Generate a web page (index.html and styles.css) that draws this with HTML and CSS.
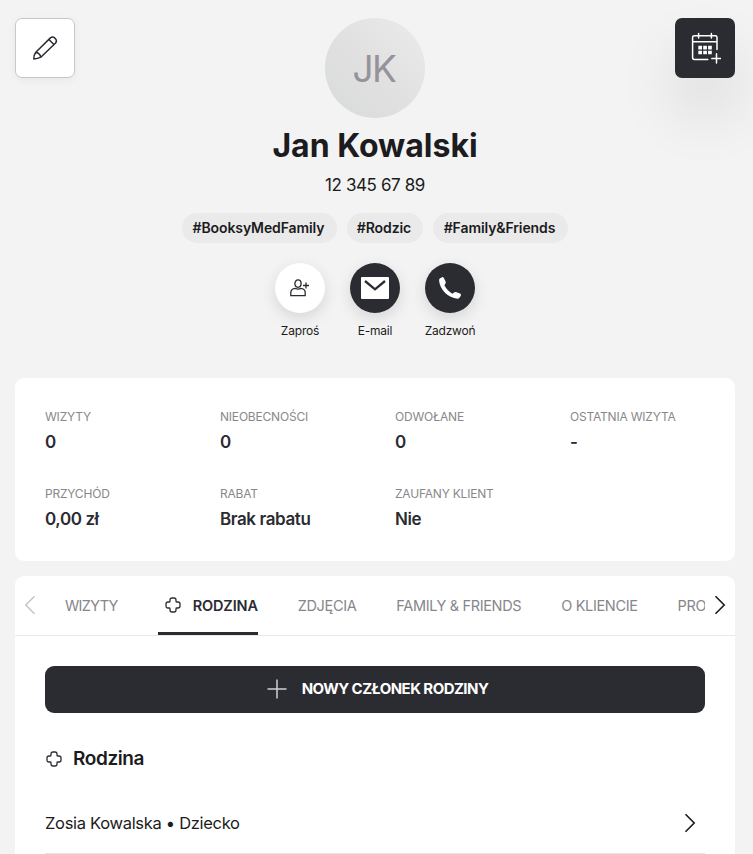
FILE: index.html
```
<!DOCTYPE html>
<html lang="pl">
<head>
    <meta charset="UTF-8">
    <meta name="viewport" content="width=device-width, initial-scale=1.0">
    <title>Jan Kowalski</title>
    <link rel="stylesheet" href="styles.css">
</head>
<body>

    <div class="page">
        <!-- Header -->
        <div class="header">
            <button class="square-btn" aria-label="Edytuj">
                <svg width="30" height="30" viewBox="0 0 30 30" fill="none" stroke="#2b2b32" stroke-width="1.5" stroke-linejoin="round">
                    <path d="M5.8 19.3 20.4 4.9Q22.6 3.2 24.7 4.9L25.6 5.9Q27.3 8 25.6 10L10.8 24.2Q7.8 25.9 3.8 26Q3.5 22.4 5.8 19.3Z"/>
                    <path d="M18.9 6.5 23.9 11.5M5.8 19.3Q10 20.5 10.8 24.2"/>
                </svg>
            </button>
            <div class="avatar">JK</div>
            <button class="square-btn dark" aria-label="Nowa wizyta">
                <svg width="32" height="32" viewBox="0 0 32 32" fill="none" stroke="#fff" stroke-width="1.5" stroke-linecap="round">
                    <path d="M18.8 27.4H5.3Q3.6 27.4 3.6 25.6V5.4Q3.6 3.8 5.3 3.8H26.4Q28 3.8 28 5.4V17.5M3.6 9.7H28M9.6 1.5V6M22.4 1.5V6M27.5 21.7V31M22.8 26.4H32"/>
                    <path d="M9.3 13.7h3.7v3.7H9.3zM14.2 13.7h3.7v3.7h-3.7zM19.1 13.7h3.7v3.7h-3.7zM9.3 18.8h3.7v3.5H9.3zM14.2 18.8h3.7v3.5h-3.7zM19.1 18.8h3.7v3.5h-3.7z" fill="#fff" stroke="none"/>
                </svg>
            </button>
        </div>

        <h1>Jan Kowalski</h1>
        <div class="phone">12 345 67 89</div>

        <div class="tags">
            <span class="tag tag-med">#BooksyMedFamily</span>
            <span class="tag tag-parent">#Rodzic</span>
            <span class="tag tag-family">#Family&amp;Friends</span>
        </div>

        <!-- Contact actions -->
        <div class="actions">
            <div class="action">
                <div class="circle light">
                    <svg width="20" height="18" viewBox="0 0 20 18" fill="none" stroke="#2b2b32" stroke-width="1.3">
                        <ellipse cx="8" cy="4.6" rx="3.1" ry="3.7"/>
                        <path d="M5.2 9.4Q1 9.8 .8 13.5V16.6H15.2V13.5Q15 9.8 10.8 9.4Q8 10.9 5.2 9.4M13 6.5H19M16 3.5V9.5"/>
                    </svg>
                </div>
                <span>Zaproś</span>
            </div>
            <div class="action">
                <div class="circle">
                    <svg width="28" height="22" viewBox="0 0 28 22">
                        <rect width="28" height="22" rx="1" fill="#fff"/>
                        <path d="M4 4 14 12.3 24 4" fill="none" stroke="#2b2b32" stroke-width="2.3"/>
                    </svg>
                </div>
                <span>E-mail</span>
            </div>
            <div class="action">
                <div class="circle">
                    <svg width="24" height="24" viewBox="0 0 24 24" fill="#fff">
                        <path d="M1.8 2.6 4 1.2Q5 .8 5.7 1.8L7.6 5.4Q8.2 6.7 7.3 7.7L6.4 9.3Q9.2 14.8 14.4 17.7L16 16.4Q16.8 15.8 17.9 16L22 17.4Q23.4 18.1 22.9 19.4L21.7 21.6Q21 22.8 19.6 22.7C10 21.8 1.8 13.7 1.1 4.5Q1 3.3 1.8 2.6Z"/>
                    </svg>
                </div>
                <span>Zadzwoń</span>
            </div>
        </div>

        <!-- Customer stats -->
        <div class="card stats">
            <div class="stat"><span class="stat-label">WIZYTY</span><strong>0</strong></div>
            <div class="stat"><span class="stat-label">NIEOBECNOŚCI</span><strong>0</strong></div>
            <div class="stat"><span class="stat-label">ODWOŁANE</span><strong>0</strong></div>
            <div class="stat"><span class="stat-label">OSTATNIA WIZYTA</span><strong>-</strong></div>
            <div class="stat"><span class="stat-label">PRZYCHÓD</span><strong>0,00 zł</strong></div>
            <div class="stat"><span class="stat-label">RABAT</span><strong>Brak rabatu</strong></div>
            <div class="stat"><span class="stat-label">ZAUFANY KLIENT</span><strong>Nie</strong></div>
        </div>

        <!-- Tabs -->
        <div class="card details">
            <div class="tabs">
                <svg class="arrow" width="30" height="20" viewBox="0 0 30 20" fill="none" stroke="#c4c4c8" stroke-width="1.5">
                    <path d="M19.5 1.3 10.8 10 19.5 18.7"/>
                </svg>
                <div class="tab-list">
                    <a class="tab visits">WIZYTY</a>
                    <a class="tab active">
                        <svg width="16" height="16" viewBox="0 0 16 16" fill="none" stroke="#2b2b32" stroke-width="1.3">
                            <path d="M5 3Q5 1 7 1H9Q11 1 11 3V4.3Q11 5 11.7 5H13Q15 5 15 7V9Q15 11 13 11H11.7Q11 11 11 11.7V13Q11 15 9 15H7Q5 15 5 13V11.7Q5 11 4.3 11H3Q1 11 1 9V7Q1 5 3 5H4.3Q5 5 5 4.3Z"/>
                        </svg>
                        <span>RODZINA</span>
                    </a>
                    <a class="tab">ZDJĘCIA</a>
                    <a class="tab">FAMILY &amp; FRIENDS</a>
                    <a class="tab">O KLIENCIE</a>
                    <a class="tab">PRO</a>
                </div>
                <svg class="arrow" width="30" height="20" viewBox="0 0 30 20" fill="none" stroke="#1b1b20" stroke-width="1.6">
                    <path d="M10.5 1.3 19.2 10 10.5 18.7"/>
                </svg>
            </div>

            <div class="family">
                <button class="add-btn">
                    <svg width="20" height="20" viewBox="0 0 20 20" stroke="#d0d0d3" stroke-width="1.5">
                        <path d="M10 .5V19.5M.5 10H19.5"/>
                    </svg>
                    <span>NOWY CZŁONEK RODZINY</span>
                </button>

                <h2>
                    <svg width="16" height="16" viewBox="0 0 16 16" fill="none" stroke="#2b2b32" stroke-width="1.3">
                        <path d="M5 3Q5 1 7 1H9Q11 1 11 3V4.3Q11 5 11.7 5H13Q15 5 15 7V9Q15 11 13 11H11.7Q11 11 11 11.7V13Q11 15 9 15H7Q5 15 5 13V11.7Q5 11 4.3 11H3Q1 11 1 9V7Q1 5 3 5H4.3Q5 5 5 4.3Z"/>
                    </svg>
                    <span>Rodzina</span>
                </h2>

                <div class="member">
                    <span>Zosia Kowalska • Dziecko</span>
                    <svg width="30" height="20" viewBox="0 0 30 20" fill="none" stroke="#1b1b20" stroke-width="1.6">
                        <path d="M10.5 1.3 19.2 10 10.5 18.7"/>
                    </svg>
                </div>
            </div>
        </div>
    </div>

</body>
</html>
```
FILE: styles.css
```
* {
    box-sizing: border-box;
}
body {
    font-family: Inter, "Open Sans", sans-serif;
    background-color: #f3f3f3;
    color: #1b1b20;
    margin: 0;
    height: 854px;
    overflow: hidden;
}
svg {
    display: block;
    flex: none;
}
button {
    font-family: inherit;
    border: none;
    padding: 0;
    cursor: pointer;
}
.page {
    width: 750px;
    padding: 18px 15px 0;
}
.header {
    display: flex;
    justify-content: space-between;
    align-items: flex-start;
}
.square-btn {
    width: 60px;
    height: 60px;
    display: flex;
    justify-content: center;
    align-items: center;
    background-color: #fff;
    border: 1px solid #c8c8cb;
    border-radius: 7px;
    box-shadow: 0 2px 8px rgba(0,0,0,0.05);
}
.square-btn.dark {
    background-color: #2b2b32;
    border: none;
    box-shadow: 0 35px 60px rgba(0,0,0,0.1);
}
.avatar {
    width: 100px;
    height: 100px;
    border-radius: 50%;
    background: linear-gradient(45deg, #d8dbda, #dfdfdf 40%, #ebebeb);
    color: #95929a;
    font-size: 37px;
    letter-spacing: -1.5px;
    line-height: 102px;
    padding-right: 2px;
    text-align: center;
}
h1 {
    margin: 5px 0 0;
    font-size: 32px;
    line-height: 45px;
    text-align: center;
}
.phone {
    margin-top: 6px;
    font-size: 17px;
    letter-spacing: -0.4px;
    line-height: 23px;
    text-align: center;
}
.tags {
    display: flex;
    justify-content: center;
    gap: 10px;
    margin-top: 16px;
}
.tag {
    height: 30px;
    border-radius: 15px;
    background-color: #eaeaea;
    font-size: 14px;
    font-weight: 600;
    letter-spacing: -0.1px;
    line-height: 30px;
    padding-right: 2px;
    text-align: center;
}
.tag-med {
    width: 155px;
}
.tag-parent {
    width: 76px;
}
.tag-family {
    width: 135px;
}
.actions {
    display: flex;
    justify-content: center;
    margin-top: 20px;
}
.action {
    width: 75px;
    display: flex;
    flex-direction: column;
    align-items: center;
    font-size: 12px;
    letter-spacing: -0.2px;
    line-height: 18px;
    gap: 9px;
}
.circle {
    width: 50px;
    height: 50px;
    display: flex;
    justify-content: center;
    align-items: center;
    border-radius: 50%;
    background-color: #2b2b32;
    box-shadow: 0 5px 15px rgba(0,0,0,0.12);
}
.circle.light {
    background-color: #fff;
}
.card {
    background-color: #fff;
    border-radius: 9px;
}
.stats {
    height: 183px;
    margin-top: 38px;
    padding: 30px 0 0 30px;
    display: grid;
    grid-template-columns: repeat(4, 175px);
    grid-template-rows: 77px 77px;
}
.stat {
    display: flex;
    flex-direction: column;
    gap: 7px;
}
.stat-label {
    color: #88888b;
    font-size: 12px;
    letter-spacing: -0.2px;
    line-height: 18px;
}
.stat strong {
    font-size: 17px;
    font-weight: 600;
    letter-spacing: -0.4px;
    line-height: 18px;
    color: #2b2b32;
}
.details {
    height: 300px;
    margin-top: 15px;
}
.tabs {
    height: 60px;
    display: flex;
    align-items: center;
    border-bottom: 1px solid #e8e8ea;
}
.arrow {
    flex: none;
    margin-bottom: 1px;
}
.tab-list {
    flex: 1;
    height: 59px;
    display: flex;
    gap: 40px;
    padding-left: 20px;
    overflow: hidden;
    white-space: nowrap;
}
.tab {
    flex: none;
    color: #86868b;
    font-size: 14.5px;
    letter-spacing: -0.35px;
    line-height: 59px;
}
.tab.visits {
    letter-spacing: -0.7px;
}
.tab.active {
    width: 100px;
    display: flex;
    align-items: center;
    gap: 12px;
    padding: 2px 0 0 7px;
    color: #2b2b32;
    font-weight: 600;
    letter-spacing: -0.15px;
    border-bottom: 3px solid #2b2b32;
}
.family {
    padding: 30px;
}
.add-btn {
    width: 660px;
    height: 47px;
    display: flex;
    justify-content: center;
    align-items: center;
    gap: 15px;
    border-radius: 9px;
    background-color: #2b2b32;
    color: #fff;
    font-size: 15px;
    font-weight: 700;
    letter-spacing: -0.55px;
    padding: 0 0 2px 5px;
}
h2 {
    display: flex;
    align-items: center;
    gap: 11px;
    margin: 32px 0 0;
    padding-left: 1px;
    font-size: 19px;
    font-weight: 600;
    letter-spacing: -0.4px;
    line-height: 28px;
}
.member {
    height: 61px;
    margin-top: 20px;
    display: flex;
    justify-content: space-between;
    align-items: center;
    border-bottom: 1px solid #e5e5e5;
    font-size: 16.5px;
    letter-spacing: -0.3px;
}
```
